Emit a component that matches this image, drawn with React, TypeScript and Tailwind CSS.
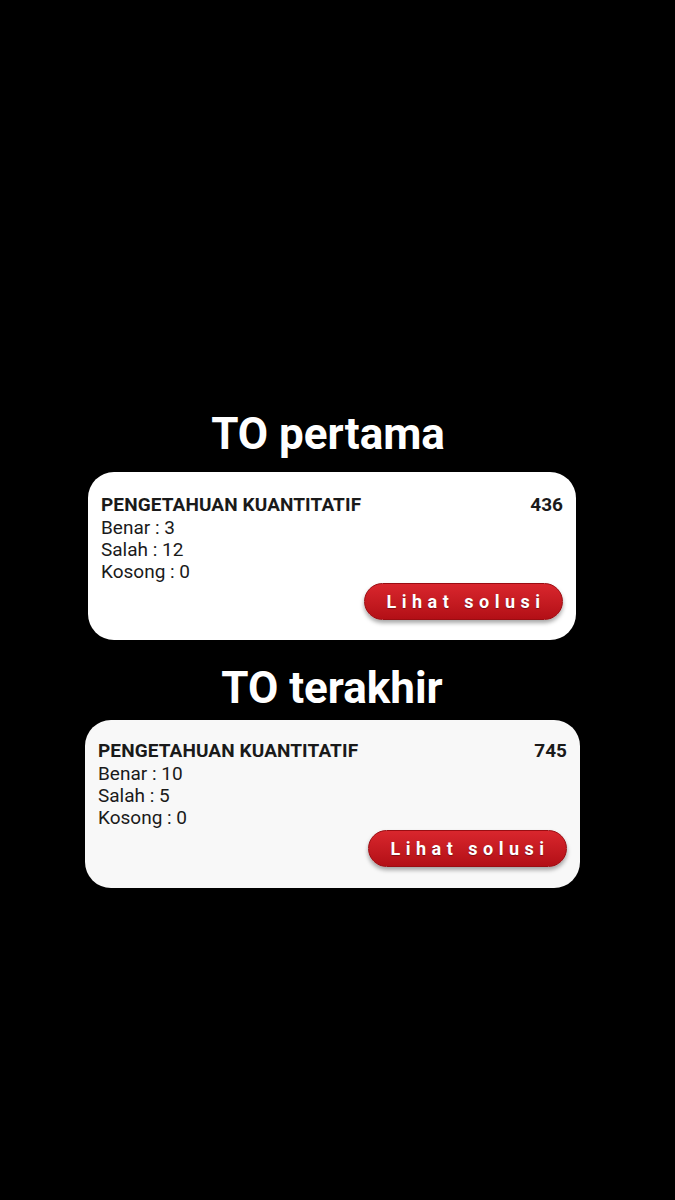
import React from "react";

type Result = {
  title: string;
  titleClass: string;
  subject: string;
  score: number;
  benar: number;
  salah: number;
  kosong: number;
  cardClass: string;
  buttonRowClass: string;
};

const results: Result[] = [
  {
    title: "TO pertama",
    titleClass: "pr-[19px]",
    subject: "PENGETAHUAN KUANTITATIF",
    score: 436,
    benar: 3,
    salah: 12,
    kosong: 0,
    cardClass: "mt-[10px] ml-[88px] w-[488px] bg-white pt-[21px] pb-[20px] pr-[13px]",
    buttonRowClass: "mt-0",
  },
  {
    title: "TO terakhir",
    titleClass: "mt-[20px] pr-[11px]",
    subject: "PENGETAHUAN KUANTITATIF",
    score: 745,
    benar: 10,
    salah: 5,
    kosong: 0,
    cardClass: "mt-[4px] ml-[85px] w-[495px] bg-[#f8f8f8] pt-[19px] pb-[21px] pr-[13px]",
    buttonRowClass: "mt-[1px]",
  },
];

function ResultCard({ r }: { r: Result }) {
  return (
    <div className={`${r.cardClass} rounded-[26px] pl-[13px] text-[#1a1a1a]`}>
      <div className="flex items-start justify-between">
        <div className="flex flex-col text-[19px]">
          <div className="font-bold leading-[24px] tracking-[0.1px]">{r.subject}</div>
          <div className="leading-[22px]">Benar : {r.benar}</div>
          <div className="leading-[22px]">Salah : {r.salah}</div>
          <div className="leading-[22px]">Kosong : {r.kosong}</div>
        </div>
        <div className="text-[19px] font-bold leading-[24px]">{r.score}</div>
      </div>
      <div className={`${r.buttonRowClass} flex justify-end`}>
        <button className="h-[37px] w-[199px] rounded-full border border-[#9a0d12] bg-gradient-to-b from-[#d9262d] to-[#b30f16] pl-[5px] text-[18px] font-bold tracking-[5.5px] text-white shadow-[0_3px_4px_rgba(0,0,0,0.35)] [text-shadow:0_1px_1px_rgba(0,0,0,0.35)]">
          Lihat solusi
        </button>
      </div>
    </div>
  );
}

export default function App() {
  return (
    <div className="min-h-[1200px] w-[675px] bg-black pt-[406px] font-['Roboto',sans-serif]">
      {results.map((r) => (
        <React.Fragment key={r.title}>
          <h1 className={`${r.titleClass} text-center text-[44px] font-bold leading-[56px] text-white`}>{r.title}</h1>
          <ResultCard r={r} />
        </React.Fragment>
      ))}
    </div>
  );
}
